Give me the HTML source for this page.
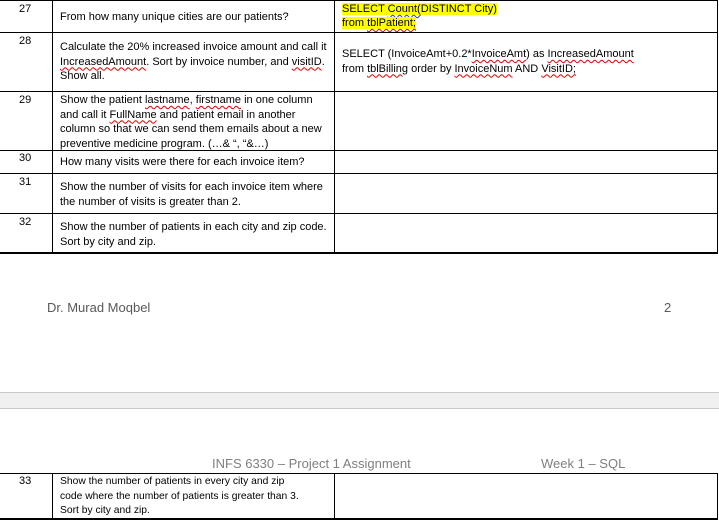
<!DOCTYPE html>
<html><head><meta charset="utf-8"><style>
body{margin:0;width:719px;height:521px;background:#fff;position:relative;overflow:hidden;font-family:"Liberation Sans",Arial,sans-serif;font-size:11px;color:#000}
.t{position:absolute;white-space:nowrap;line-height:14.5px}
.h{position:absolute;background:#000}
.sq{text-decoration:underline wavy #d00;text-decoration-thickness:1px;text-underline-offset:2px}
.sb{text-decoration:underline wavy #2040c0;text-decoration-thickness:1px;text-underline-offset:2px}
.y{background:#ffff00}
</style></head><body>
<div class="h" style="left:0;top:0;width:718px;height:1px"></div>
<div class="h" style="left:0;top:32px;width:718px;height:1px"></div>
<div class="h" style="left:0;top:91px;width:718px;height:1px"></div>
<div class="h" style="left:0;top:150px;width:718px;height:1px"></div>
<div class="h" style="left:0;top:173px;width:718px;height:1px"></div>
<div class="h" style="left:0;top:213px;width:718px;height:1px"></div>
<div class="h" style="left:0;top:252px;width:718px;height:2px"></div>
<div class="h" style="left:52px;top:0;width:1px;height:254px"></div>
<div class="h" style="left:334px;top:0;width:1px;height:254px"></div>
<div class="h" style="left:717px;top:0;width:1px;height:254px"></div>

<div class="t" style="left:19px;top:2px">27</div>
<div class="t" style="left:60px;top:10px">From how many unique cities are our patients?</div>
<div class="t" style="left:342px;top:2px"><span class="y">SELECT <span class="sb">Count(</span>DISTINCT City)</span></div>
<div class="t" style="left:342px;top:16px"><span class="y">from <span class="sq">tblPatient;</span></span></div>

<div class="t" style="left:19px;top:34px">28</div>
<div class="t" style="left:60px;top:40px">Calculate the 20% increased invoice amount and call it<br><span class="sq">IncreasedAmount</span>. Sort by invoice number, and <span class="sq">visitID</span>.<br>Show all.</div>
<div class="t" style="left:342px;top:47px">SELECT (InvoiceAmt+0.2*<span class="sq">InvoiceAmt</span>) as <span class="sq">IncreasedAmount</span><br>from <span class="sq">tblBilling</span> order by <span class="sq">InvoiceNum</span> AND <span class="sq">VisitID;</span></div>

<div class="t" style="left:19px;top:93px">29</div>
<div class="t" style="left:60px;top:93px">Show the patient <span class="sq">lastname</span>, <span class="sq">firstname</span> in one column<br>and call it <span class="sq">FullName</span> and patient email in another<br>column so that we can send them emails about a new<br>preventive medicine program. (…&amp; “, “&amp;…)</div>

<div class="t" style="left:19px;top:151px">30</div>
<div class="t" style="left:60px;top:155px">How many visits were there for each invoice item?</div>

<div class="t" style="left:19px;top:175px">31</div>
<div class="t" style="left:60px;top:180px">Show the number of visits for each invoice item where<br>the number of visits is greater than 2.</div>

<div class="t" style="left:19px;top:215px">32</div>
<div class="t" style="left:60px;top:220px">Show the number of patients in each city and zip code.<br>Sort by city and zip.</div>

<div class="t" style="left:47px;top:300px;font-size:13px;color:#595959;line-height:16px">Dr. Murad Moqbel</div>
<div class="t" style="left:664px;top:300px;font-size:13px;color:#595959;line-height:16px">2</div>

<div style="position:absolute;left:0;top:392px;width:719px;height:15px;background:#f0f0f0;border-top:1px solid #c8c8c8;border-bottom:1px solid #c8c8c8"></div>

<div class="t" style="left:212px;top:456px;font-size:13px;color:#7f7f7f;line-height:16px">INFS 6330 – Project 1 Assignment</div>
<div class="t" style="left:541px;top:456px;font-size:13px;color:#7f7f7f;line-height:16px">Week 1 – SQL</div>

<div class="h" style="left:0;top:473px;width:718px;height:1px"></div>
<div class="h" style="left:0;top:518px;width:718px;height:2px"></div>
<div class="h" style="left:52px;top:473px;width:1px;height:47px"></div>
<div class="h" style="left:334px;top:473px;width:1px;height:47px"></div>
<div class="h" style="left:717px;top:473px;width:1px;height:47px"></div>
<div class="t" style="left:19px;top:474px">33</div>
<div class="t" style="left:60px;top:475px;font-size:10.3px">Show the number of patients in every city and zip<br>code where the number of patients is greater than 3.<br>Sort by city and zip.</div>
</body></html>
